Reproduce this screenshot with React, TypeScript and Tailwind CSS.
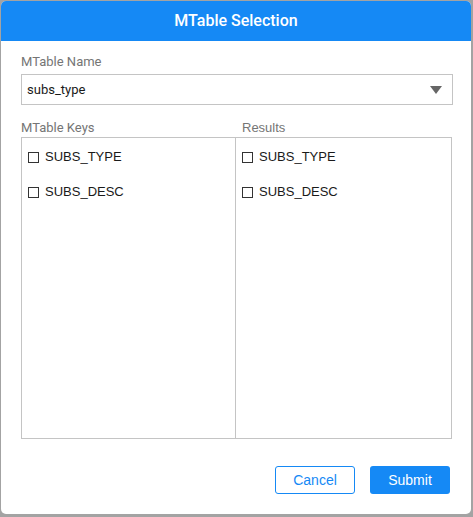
export default function App() {
  const items = ["SUBS_TYPE", "SUBS_DESC"];
  const Col = ({ border }: { border?: boolean }) => (
    <div className={`flex flex-col pt-[10px] pl-[5px] ${border ? "border-r border-[#c4c4c4]" : ""}`}>
      {items.map((t) => (
        <div key={t} className="flex items-center h-[18px] mb-[17px] text-[13px] text-[#1a1a1a]" style={{ fontFamily: '"Liberation Sans", Arial, sans-serif' }}>
          <span className="inline-block w-[11px] h-[11px] border border-[#333] mr-[6px] ml-[1px]"></span>
          {t}
        </div>
      ))}
    </div>
  );
  return (
    <div className="w-[473px] h-[517px] bg-[#a3a3a3] pt-px pl-px" style={{ fontFamily: 'Roboto, "Liberation Sans", sans-serif' }}>
      <div className="w-[470px] h-[513px] bg-white rounded-[5px] overflow-hidden flex flex-col">
        <div className="h-[40px] bg-[#1589f5] flex items-center justify-center text-white text-[16px] font-medium">
          MTable Selection
        </div>
        <div className="px-[20px] pt-[13px] flex flex-col">
          <div className="text-[13px] text-[#757575] leading-[16px] mb-[4px]">MTable Name</div>
          <div className="h-[31px] w-[432px] border border-[#c4c4c4] flex items-center justify-between pl-[5px] pr-[10px]">
            <span className="text-[13px] text-[#1a1a1a]">subs_type</span>
            <svg width="12" height="8" viewBox="0 0 12 8"><path d="M0 0 L12 0 L6 8 Z" fill="#666" /></svg>
          </div>
          <div className="grid grid-cols-[214px_216px] w-[431px] mt-[15px]">
            <div className="text-[13px] text-[#757575] leading-[16px] mb-[1px]">MTable Keys</div>
            <div className="text-[13px] text-[#757575] leading-[16px] mb-[1px] pl-[7px]" style={{ fontFamily: '"Liberation Sans", Arial, sans-serif' }}>Results</div>
          </div>
          <div className="grid grid-cols-[214px_216px] w-[431px] h-[302px] border border-[#c4c4c4]">
            <Col border />
            <Col />
          </div>
          <div className="flex justify-end gap-[15px] mt-[27px] pr-[1px]" style={{ fontFamily: '"Liberation Sans", Arial, sans-serif' }}>
            <button className="w-[80px] h-[28px] border border-[#1589f5] rounded-[3px] text-[#1589f5] text-[14px] bg-white">Cancel</button>
            <button className="w-[80px] h-[28px] rounded-[3px] bg-[#1589f5] text-white text-[14px]">Submit</button>
          </div>
        </div>
      </div>
    </div>
  );
}
